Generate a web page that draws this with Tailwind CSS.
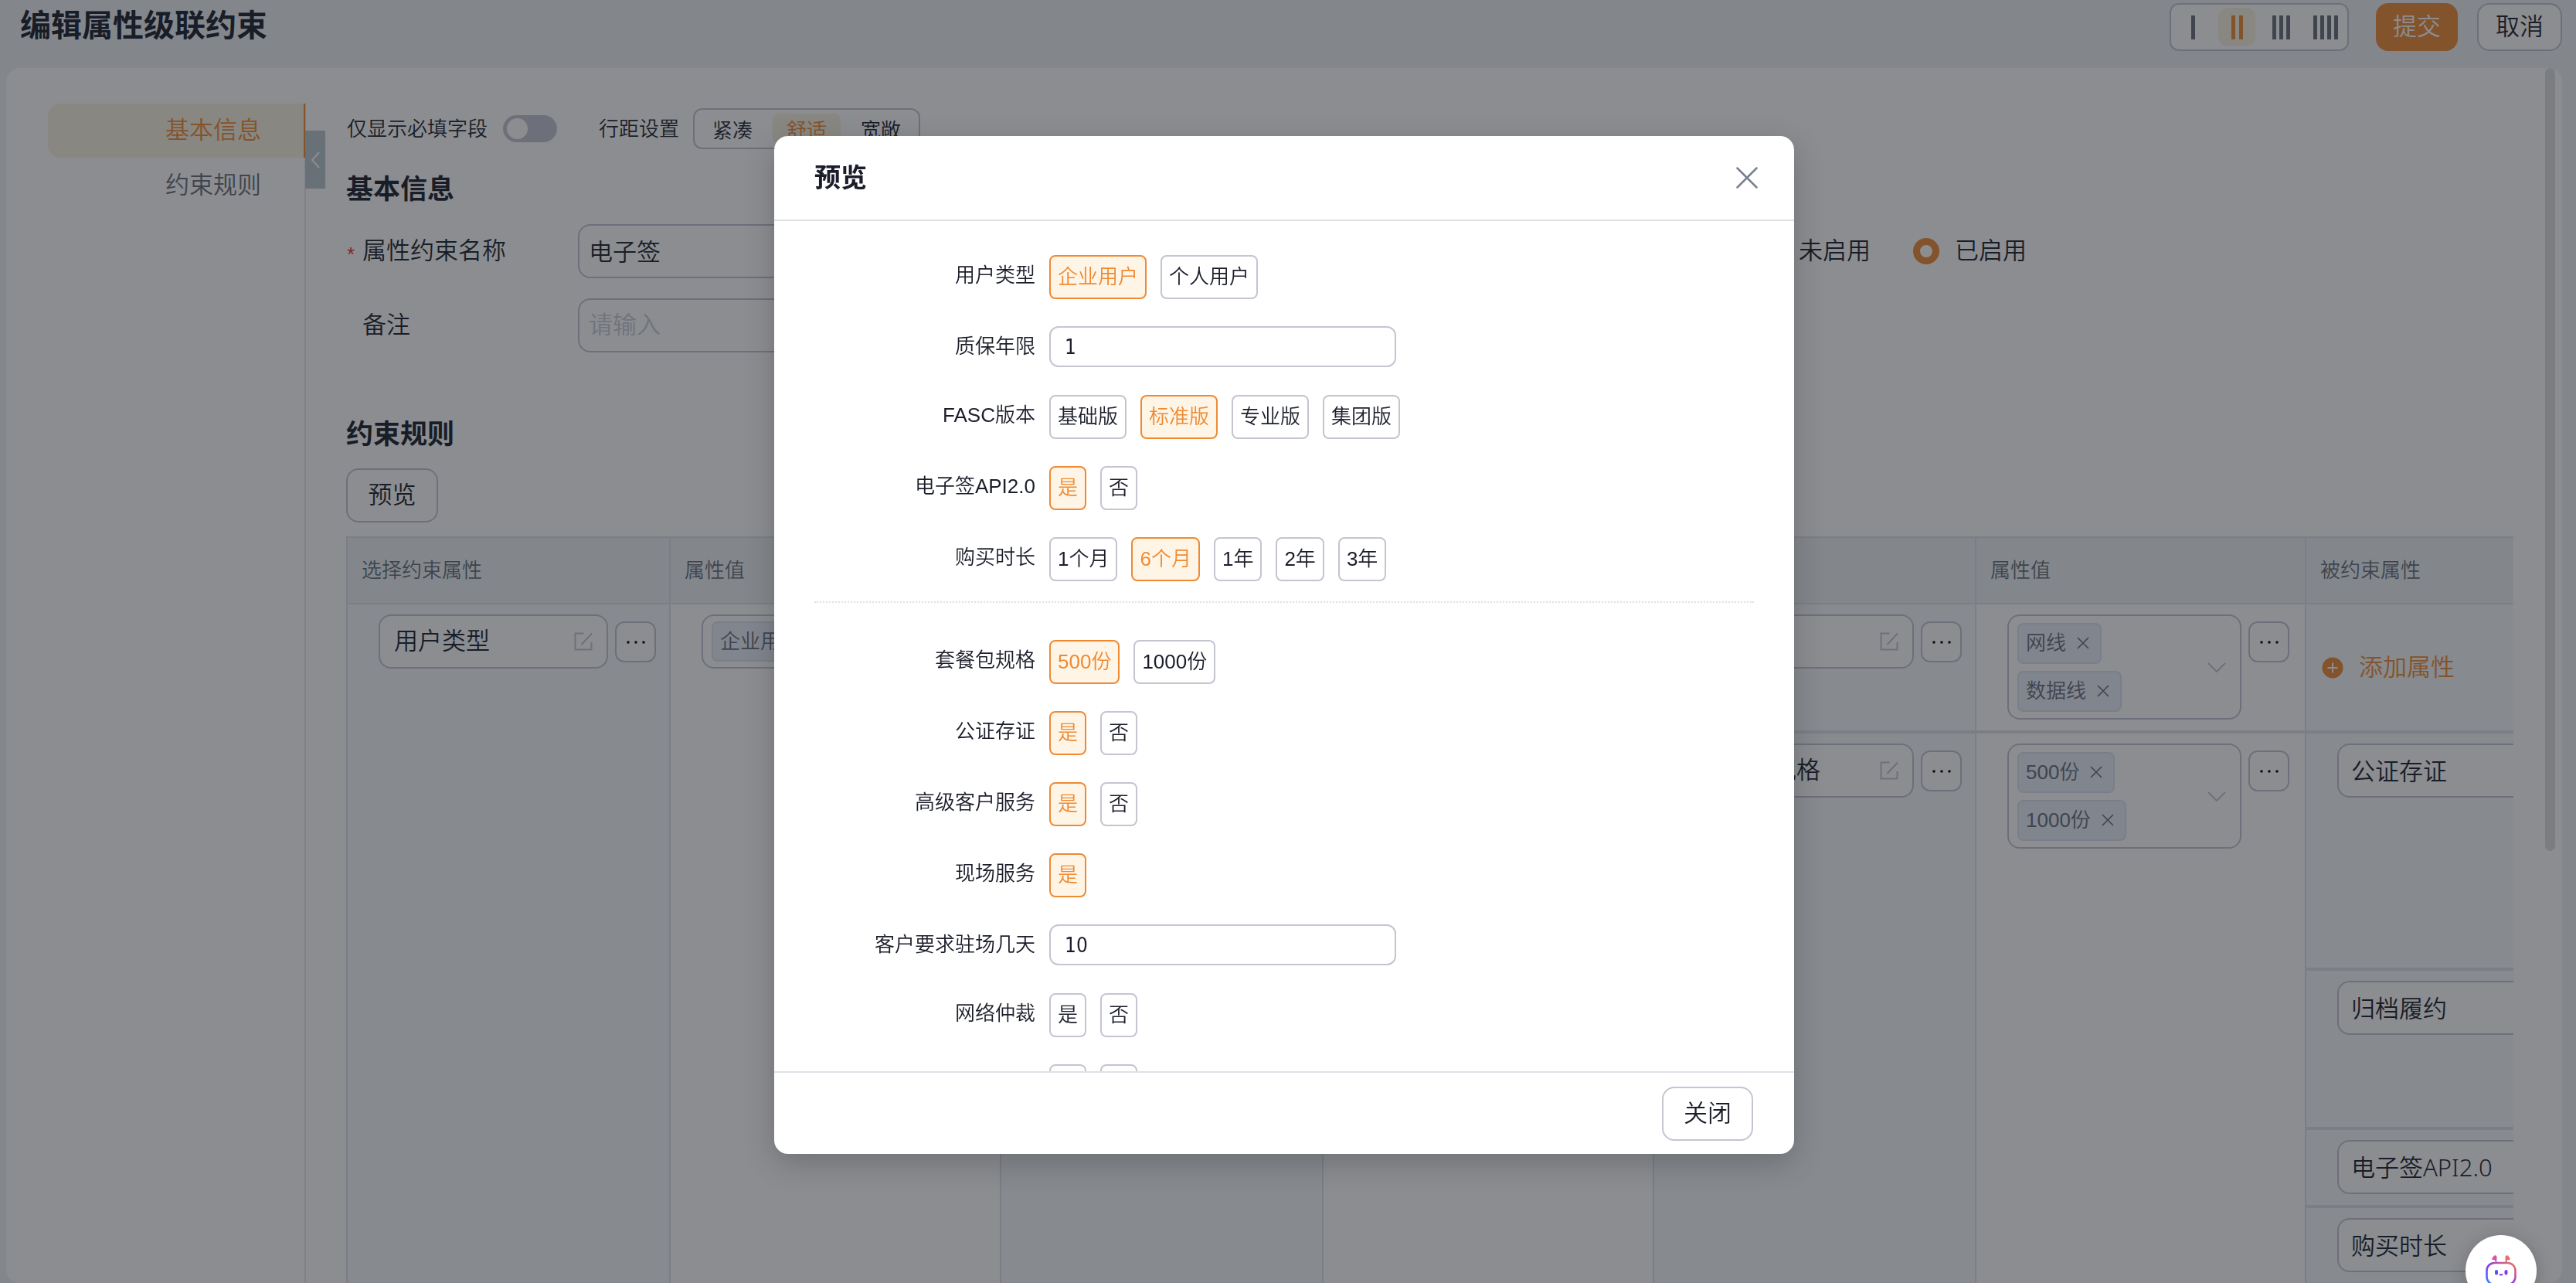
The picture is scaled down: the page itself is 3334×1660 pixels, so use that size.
<!DOCTYPE html>
<html lang="zh-CN">
<head>
  <meta charset="UTF-8" />
  <title>编辑属性级联约束</title>
  <script src="https://cdn.jsdelivr.net/npm/@tailwindcss/browser@4"></script>
</head>
<body class="h-screen overflow-hidden flex flex-col bg-[#eef3f5] text-[#1b1e2a] text-[31px] leading-[44px] font-[350] font-['Liberation_Sans','Noto_Sans_CJK_SC',sans-serif]">

  <svg class="hidden">
    <symbol id="edit" viewBox="0 0 24 24"><path d="M12.500 1.500H1.500v21h21V13M9.500 16 23 1.500" fill="none" stroke="currentColor" stroke-width="2" /></symbol>
    <symbol id="dots" viewBox="0 0 24 6"><circle cx="2" cy="3" r="1.800" /><circle cx="12" cy="3" r="1.800" /><circle cx="22" cy="3" r="1.800" /></symbol>
    <symbol id="cross" viewBox="0 0 16 16"><path d="m1 1 14 14M15 1 1 15" fill="none" stroke="currentColor" stroke-width="1.600" /></symbol>
    <symbol id="down" viewBox="0 0 24 13"><path d="m1 1 11 11L23 1" fill="none" stroke="currentColor" stroke-width="2" /></symbol>
  </svg>

  <!-- Header -->
  <header class="h-[88px] shrink-0 flex items-start justify-between pt-1 pl-[26px] pr-[18px]">
    <h1 class="text-[40px] leading-[58px] font-bold">编辑属性级联约束</h1>
    <div class="flex">
      <div class="w-[232px] h-[62px] border-2 border-[#c3c5d0] rounded-xl bg-white p-1 flex justify-between text-[#666d78]">
        <button aria-label="一列" class="w-12 flex items-center justify-center gap-1"><i class="w-[5px] h-[31px] bg-current"></i></button>
        <button aria-label="两列" class="w-12 flex items-center justify-center gap-[5px] rounded-xl bg-[#fbf2df] text-[#ef8a32]"><i class="w-[5px] h-[31px] bg-current"></i><i class="w-[5px] h-[31px] bg-current"></i></button>
        <button aria-label="三列" class="w-12 flex items-center justify-center gap-1"><i class="w-[5px] h-[31px] bg-current"></i><i class="w-[5px] h-[31px] bg-current"></i><i class="w-[5px] h-[31px] bg-current"></i></button>
        <button aria-label="四列" class="w-12 flex items-center justify-center gap-1"><i class="w-[5px] h-[31px] bg-current"></i><i class="w-[5px] h-[31px] bg-current"></i><i class="w-[5px] h-[31px] bg-current"></i><i class="w-[5px] h-[31px] bg-current"></i></button>
      </div>
      <button class="ml-[35px] w-[106px] h-[62px] rounded-2xl bg-[#ef8a32] text-white">提交</button>
      <button class="ml-[25px] w-[110px] h-[62px] rounded-2xl border-2 border-[#c3c5d0] bg-white">取消</button>
    </div>
  </header>

  <div class="relative flex-1 min-h-0 ml-2 mr-[18px] bg-white rounded-[18px] flex overflow-hidden">
    <!-- Sidebar -->
    <aside class="relative w-[388px] shrink-0 pt-[46px]">
      <div class="absolute right-0 inset-y-0 mt-[46px] w-0.5 bg-[#e6e8ec]"></div>
      <nav class="relative pl-[54px] flex flex-col gap-px">
        <a href="#base" class="h-[70px] mr-px pr-[55px] flex items-center justify-end rounded-l-2xl border-r-2 border-[#ef8a32] bg-[#fbf2df] text-[#ef8a32]">基本信息</a>
        <a href="#rules" class="h-[70px] pr-[58px] flex items-center justify-end text-[#666d78]">约束规则</a>
      </nav>
      <button aria-label="收起" class="absolute left-[387px] top-[81px] z-10 w-[26px] h-[75px] bg-[#b9c4cd] flex items-center justify-center text-white">
        <svg class="w-3 h-[22px]" viewBox="0 0 12 22"><path d="M11 1 2 11l9 10" fill="none" stroke="currentColor" stroke-width="2" /></svg>
      </button>
    </aside>

    <main class="flex-1 min-w-0 pl-[52px] pt-[52px] pr-[63px]">
      <div class="h-[53px] flex items-center text-[26px]">
        <label for="required-only" class="pl-px">仅显示必填字段</label>
        <span class="relative ml-5 w-[70px] h-[35px] flex">
          <input id="required-only" type="checkbox" class="appearance-none w-full h-full rounded-full bg-[#c3c5d0]" />
          <i class="absolute left-[5px] top-1 size-[27px] rounded-full bg-white"></i>
        </span>
        <span class="ml-[54px]">行距设置</span>
        <div class="ml-[18px] h-[53px] p-[5px] border-2 border-[#c3c5d0] rounded-xl flex gap-2">
          <button class="w-[88px] rounded-lg">紧凑</button>
          <button class="w-[88px] rounded-lg bg-[#fbf2df] text-[#ef8a32]">舒适</button>
          <button class="w-[88px] rounded-lg">宽敞</button>
        </div>
      </div>

      <h2 id="base" class="mt-[30px] text-[35px] font-bold">基本信息</h2>
      <div class="mt-[23px] flex items-center">
        <label for="name" class="w-[300px] shrink-0 flex items-center"><b class="w-[21px] pl-px pt-2 text-[26px] font-normal text-[#e5322d]">*</b>属性约束名称</label>
        <input id="name" value="电子签" class="w-[1040px] shrink-0 h-[70px] px-3 pb-1 rounded-2xl border-2 border-[#c3c5d0]" />
        <span class="ml-[60px] w-[426px] shrink-0">状态</span>
        <label class="w-[202px] shrink-0 flex items-center gap-5"><input type="radio" name="state" class="appearance-none size-[34px] rounded-full border-2 border-[#c3c5d0]" />未启用</label>
        <label class="flex items-center gap-5"><input type="radio" name="state" checked class="appearance-none size-[34px] rounded-full border-[#ef8a32] border-[9px]" />已启用</label>
      </div>
      <div class="mt-[26px] flex items-center">
        <label for="remark" class="w-[300px] shrink-0 pl-[21px]">备注</label>
        <input id="remark" placeholder="请输入" class="w-[1040px] h-[70px] px-3 rounded-2xl border-2 border-[#c3c5d0] placeholder:text-[#c9ccd2]" />
      </div>

      <h2 id="rules" class="mt-[84px] text-[35px] font-bold">约束规则</h2>
      <button class="mt-[22px] w-[119px] h-[70px] rounded-2xl border-2 border-[#c3c5d0] block">预览</button>

      <div class="mt-[18px] overflow-hidden">
        <table class="table-fixed border-separate border-spacing-0 w-[2963px] border-t-2 border-[#dfe1e6]">
          <colgroup>
            <col class="w-[418px]" /><col class="w-[428px]" /><col class="w-[417px]" /><col class="w-[428px]" /><col class="w-[417px]" /><col class="w-[427px]" /><col class="w-[428px]" />
          </colgroup>
          <thead>
            <tr class="h-[86px] bg-[#eff3f5] text-[26px] text-left text-[#666d78]">
              <th class="font-[350] px-[18px] border-l-2 border-b-2 border-[#dfe1e6]">选择约束属性</th>
              <th class="font-[350] px-[18px] border-l-2 border-b-2 border-[#dfe1e6]">属性值</th>
              <th class="font-[350] px-[18px] border-l-2 border-b-2 border-[#dfe1e6]">选择约束属性</th>
              <th class="font-[350] px-[18px] border-l-2 border-b-2 border-[#dfe1e6]">属性值</th>
              <th class="font-[350] px-[18px] border-l-2 border-b-2 border-[#dfe1e6]">选择约束属性</th>
              <th class="font-[350] px-[18px] border-l-2 border-b-2 border-[#dfe1e6]">属性值</th>
              <th class="font-[350] px-[18px] border-l-2 border-b-2 border-[#dfe1e6]">被约束属性</th>
            </tr>
          </thead>
          <tbody class="align-top">
            <tr class="h-[167px]">
              <td rowspan="5" class="pl-10 pt-[13px] border-l-2 border-[#dfe1e6] bg-[#f6f9fb]">
                <div class="flex gap-[9px]">
                  <div class="w-[297px] h-[70px] px-[18px] rounded-2xl border-2 border-[#c3c5d0] bg-white flex items-center text-[#c3c5d0]">
                    <input aria-label="约束属性" value="用户类型" class="flex-1 min-w-0 text-[#1b1e2a]" /><svg class="size-6"><use href="#edit" /></svg>
                  </div>
                  <button aria-label="更多" class="mt-[9px] size-[53px] rounded-xl border-2 border-[#c3c5d0] bg-white flex items-center justify-center"><svg class="w-6 h-1.5"><use href="#dots" /></svg></button>
                </div>
              </td>
              <td rowspan="5" class="pl-10 pt-[13px] border-l-2 border-[#dfe1e6]">
                <div class="w-[302px] h-[70px] p-[7px] pl-[11px] rounded-2xl border-2 border-[#c3c5d0] flex text-[26px] text-[#666d78]">
                  <span class="flex items-center h-[52px] px-[9px] rounded-lg border-2 border-[#dde0ec] bg-[#ebeef9]">企业用户</span>
                </div>
              </td>
              <td rowspan="5" class="border-l-2 border-[#dfe1e6] bg-[#f6f9fb]"></td>
              <td rowspan="5" class="border-l-2 border-[#dfe1e6]"></td>
              <td class="pl-10 pt-[13px] border-l-2 border-b-4 border-[#dfe1e6] bg-[#f6f9fb]">
                <div class="flex gap-[9px]">
                  <div class="w-[296px] h-[70px] px-[18px] rounded-2xl border-2 border-[#c3c5d0] bg-white flex items-center text-[#c3c5d0]">
                    <input aria-label="约束属性" value="" class="flex-1 min-w-0 text-[#1b1e2a]" /><svg class="size-6"><use href="#edit" /></svg>
                  </div>
                  <button aria-label="更多" class="mt-[9px] size-[53px] rounded-xl border-2 border-[#c3c5d0] bg-white flex items-center justify-center"><svg class="w-6 h-1.5"><use href="#dots" /></svg></button>
                </div>
              </td>
              <td class="pl-10 pt-[13px] border-l-2 border-b-4 border-[#dfe1e6]">
                <div class="flex gap-[9px]">
                  <div class="w-[303px] h-[136px] pl-[11px] pr-[18px] rounded-2xl border-2 border-[#c3c5d0] flex items-center justify-between text-[26px] text-[#666d78]">
                    <div class="flex flex-col items-start gap-[9px]">
                      <span class="flex items-center gap-3.5 h-[53px] pl-[9px] pr-3.5 rounded-lg border-2 border-[#dde0ec] bg-[#ebeef9]">网线<svg class="size-4"><use href="#cross" /></svg></span>
                      <span class="flex items-center gap-3.5 h-[53px] pl-[9px] pr-3.5 rounded-lg border-2 border-[#dde0ec] bg-[#ebeef9]">数据线<svg class="size-4"><use href="#cross" /></svg></span>
                    </div>
                    <svg class="w-6 h-[13px] text-[#c3c5d0]"><use href="#down" /></svg>
                  </div>
                  <button aria-label="更多" class="mt-[9px] size-[53px] rounded-xl border-2 border-[#c3c5d0] bg-white flex items-center justify-center"><svg class="w-6 h-1.5"><use href="#dots" /></svg></button>
                </div>
              </td>
              <td class="pl-5 align-middle border-l-2 border-b-4 border-[#dfe1e6] bg-[#f6f9fb]">
                <button class="flex items-center gap-5 text-[#ef8a32]">
                  <svg class="size-7" viewBox="0 0 28 28"><circle cx="14" cy="14" r="13.500" fill="currentColor" /><path d="M14 7.500v13M7.500 14h13" stroke="#fff" stroke-width="2" /></svg>添加属性
                </button>
              </td>
            </tr>
            <tr class="h-[307px]">
              <td rowspan="4" class="pl-10 pt-[13px] border-l-2 border-[#dfe1e6] bg-[#f6f9fb]">
                <div class="flex gap-[9px]">
                  <div class="w-[296px] h-[70px] px-[18px] rounded-2xl border-2 border-[#c3c5d0] bg-white flex items-center text-[#c3c5d0]">
                    <input aria-label="约束属性" value="套餐包规格" class="flex-1 min-w-0 text-[#1b1e2a]" /><svg class="size-6"><use href="#edit" /></svg>
                  </div>
                  <button aria-label="更多" class="mt-[9px] size-[53px] rounded-xl border-2 border-[#c3c5d0] bg-white flex items-center justify-center"><svg class="w-6 h-1.5"><use href="#dots" /></svg></button>
                </div>
              </td>
              <td rowspan="4" class="pl-10 pt-[13px] border-l-2 border-[#dfe1e6]">
                <div class="flex gap-[9px]">
                  <div class="w-[303px] h-[136px] pl-[11px] pr-[18px] rounded-2xl border-2 border-[#c3c5d0] flex items-center justify-between text-[26px] text-[#666d78]">
                    <div class="flex flex-col items-start gap-[9px]">
                      <span class="flex items-center gap-3.5 h-[53px] pl-[9px] pr-3.5 rounded-lg border-2 border-[#dde0ec] bg-[#ebeef9]">500份<svg class="size-4"><use href="#cross" /></svg></span>
                      <span class="flex items-center gap-3.5 h-[53px] pl-[9px] pr-3.5 rounded-lg border-2 border-[#dde0ec] bg-[#ebeef9]">1000份<svg class="size-4"><use href="#cross" /></svg></span>
                    </div>
                    <svg class="w-6 h-[13px] text-[#c3c5d0]"><use href="#down" /></svg>
                  </div>
                  <button aria-label="更多" class="mt-[9px] size-[53px] rounded-xl border-2 border-[#c3c5d0] bg-white flex items-center justify-center"><svg class="w-6 h-1.5"><use href="#dots" /></svg></button>
                </div>
              </td>
              <td class="pl-10 pt-[13px] border-l-2 border-b-4 border-[#dfe1e6] bg-[#f6f9fb]"><input aria-label="被约束属性" value="公证存证" class="block w-[297px] h-[70px] px-4 pb-1 rounded-2xl border-2 border-[#c3c5d0] bg-white" /></td>
            </tr>
            <tr class="h-[206px]">
              <td class="pl-10 pt-[13px] border-l-2 border-b-4 border-[#dfe1e6] bg-[#f6f9fb]"><input aria-label="被约束属性" value="归档履约" class="block w-[297px] h-[70px] px-4 pb-1 rounded-2xl border-2 border-[#c3c5d0] bg-white" /></td>
            </tr>
            <tr class="h-[101px]">
              <td class="pl-10 pt-[13px] border-l-2 border-b-4 border-[#dfe1e6] bg-[#f6f9fb]"><input aria-label="被约束属性" value="电子签API2.0" class="block w-[297px] h-[70px] px-4 pb-1 rounded-2xl border-2 border-[#c3c5d0] bg-white font-['Noto_Sans','Noto_Sans_CJK_SC',sans-serif]" /></td>
            </tr>
            <tr class="h-[101px]">
              <td class="pl-10 pt-[13px] border-l-2 border-b-4 border-[#dfe1e6] bg-[#f6f9fb]"><input aria-label="被约束属性" value="购买时长" class="block w-[297px] h-[70px] px-4 pb-1 rounded-2xl border-2 border-[#c3c5d0] bg-white" /></td>
            </tr>
          </tbody>
        </table>
      </div>
    </main>
    <div class="absolute right-[9px] top-0 w-[13px] h-[1013px] rounded-full bg-[#dfdfdf]"></div>
  </div>

  <!-- Preview dialog -->
  <div class="fixed inset-0 z-20 bg-[#181b23]/50 flex justify-center pt-44 pb-[167px] pr-2.5">
    <section role="dialog" aria-labelledby="preview-title" class="w-[1320px] bg-white rounded-[18px] shadow-[0_12px_40px_rgba(0,0,0,0.2)] flex flex-col overflow-hidden">
      <div class="h-[110px] shrink-0 pl-[52px] pr-[47px] border-b-2 border-[#dfe0e6] flex items-center justify-between">
        <h2 id="preview-title" class="text-[34px] font-bold">预览</h2>
        <button aria-label="关闭窗口" class="text-[#79808f]"><svg class="size-7" viewBox="0 0 28 28"><path d="m1.500 1.500 25 25M26.500 1.500l-25 25" fill="none" stroke="currentColor" stroke-width="2.500" stroke-linecap="round" /></svg></button>
      </div>
      <div class="flex-1 min-h-0 overflow-hidden px-[52px] pt-11 text-[26px]">
        <div class="h-[92px] flex gap-[18px]">
          <span class="w-[286px] text-right leading-[52px]">用户类型</span>
          <button class="h-[57px] px-[9px] pb-0.5 rounded-lg border-2 border-[#ef8a32] bg-[#fff5e6] text-[#ef8a32]">企业用户</button>
          <button class="h-[57px] px-[9px] pb-0.5 rounded-lg border-2 border-[#c3c5d0]">个人用户</button>
        </div>
        <div class="h-[89px] flex gap-[18px]">
          <label for="warranty" class="w-[286px] text-right leading-[52px]">质保年限</label>
          <input id="warranty" value="1" class="w-[449px] h-[53px] px-[18px] rounded-xl border-2 border-[#c3c5d0] font-['DejaVu_Sans_Condensed','DejaVu_Sans',sans-serif]" />
        </div>
        <div class="h-[92px] flex gap-[18px]">
          <span class="w-[286px] text-right leading-[52px]">FASC版本</span>
          <button class="h-[57px] px-[9px] pb-0.5 rounded-lg border-2 border-[#c3c5d0]">基础版</button>
          <button class="h-[57px] px-[9px] pb-0.5 rounded-lg border-2 border-[#ef8a32] bg-[#fff5e6] text-[#ef8a32]">标准版</button>
          <button class="h-[57px] px-[9px] pb-0.5 rounded-lg border-2 border-[#c3c5d0]">专业版</button>
          <button class="h-[57px] px-[9px] pb-0.5 rounded-lg border-2 border-[#c3c5d0]">集团版</button>
        </div>
        <div class="h-[92px] flex gap-[18px]">
          <span class="w-[286px] text-right leading-[52px]">电子签API2.0</span>
          <button class="h-[57px] px-[9px] pb-0.5 rounded-lg border-2 border-[#ef8a32] bg-[#fff5e6] text-[#ef8a32]">是</button>
          <button class="h-[57px] px-[9px] pb-0.5 rounded-lg border-2 border-[#c3c5d0]">否</button>
        </div>
        <div class="h-[83px] flex gap-[18px]">
          <span class="w-[286px] text-right leading-[52px]">购买时长</span>
          <button class="h-[57px] px-[9px] pb-0.5 rounded-lg border-2 border-[#c3c5d0]">1个月</button>
          <button class="h-[57px] px-[9px] pb-0.5 rounded-lg border-2 border-[#ef8a32] bg-[#fff5e6] text-[#ef8a32]">6个月</button>
          <button class="h-[57px] px-[9px] pb-0.5 rounded-lg border-2 border-[#c3c5d0]">1年</button>
          <button class="h-[57px] px-[9px] pb-0.5 rounded-lg border-2 border-[#c3c5d0]">2年</button>
          <button class="h-[57px] px-[9px] pb-0.5 rounded-lg border-2 border-[#c3c5d0]">3年</button>
        </div>
        <hr class="border-0 border-t-2 border-dotted border-[#dfe0e6] mb-12" />
        <div class="h-[92px] flex gap-[18px]">
          <span class="w-[286px] text-right leading-[52px]">套餐包规格</span>
          <button class="h-[57px] px-[9px] pb-0.5 rounded-lg border-2 border-[#ef8a32] bg-[#fff5e6] text-[#ef8a32]">500份</button>
          <button class="h-[57px] px-[9px] pb-0.5 rounded-lg border-2 border-[#c3c5d0]">1000份</button>
        </div>
        <div class="h-[92px] flex gap-[18px]">
          <span class="w-[286px] text-right leading-[52px]">公证存证</span>
          <button class="h-[57px] px-[9px] pb-0.5 rounded-lg border-2 border-[#ef8a32] bg-[#fff5e6] text-[#ef8a32]">是</button>
          <button class="h-[57px] px-[9px] pb-0.5 rounded-lg border-2 border-[#c3c5d0]">否</button>
        </div>
        <div class="h-[92px] flex gap-[18px]">
          <span class="w-[286px] text-right leading-[52px]">高级客户服务</span>
          <button class="h-[57px] px-[9px] pb-0.5 rounded-lg border-2 border-[#ef8a32] bg-[#fff5e6] text-[#ef8a32]">是</button>
          <button class="h-[57px] px-[9px] pb-0.5 rounded-lg border-2 border-[#c3c5d0]">否</button>
        </div>
        <div class="h-[92px] flex gap-[18px]">
          <span class="w-[286px] text-right leading-[52px]">现场服务</span>
          <button class="h-[57px] px-[9px] pb-0.5 rounded-lg border-2 border-[#ef8a32] bg-[#fff5e6] text-[#ef8a32]">是</button>
        </div>
        <div class="h-[89px] flex gap-[18px]">
          <label for="days" class="w-[286px] text-right leading-[52px]">客户要求驻场几天</label>
          <input id="days" value="10" class="w-[449px] h-[53px] px-[18px] rounded-xl border-2 border-[#c3c5d0] font-['DejaVu_Sans_Condensed','DejaVu_Sans',sans-serif]" />
        </div>
        <div class="h-[92px] flex gap-[18px]">
          <span class="w-[286px] text-right leading-[52px]">网络仲裁</span>
          <button class="h-[57px] px-[9px] pb-0.5 rounded-lg border-2 border-[#c3c5d0]">是</button>
          <button class="h-[57px] px-[9px] pb-0.5 rounded-lg border-2 border-[#c3c5d0]">否</button>
        </div>
        <div class="h-[92px] flex gap-[18px]">
          <span class="w-[286px]"></span>
          <button aria-label="是" class="h-[57px] w-12 rounded-lg border-2 border-[#c3c5d0]"></button>
          <button aria-label="否" class="h-[57px] w-12 rounded-lg border-2 border-[#c3c5d0]"></button>
        </div>
      </div>
      <div class="h-[107px] shrink-0 pr-[53px] border-t-2 border-[#dfe0e6] flex items-center justify-end">
        <button class="w-[118px] h-[70px] rounded-2xl border-2 border-[#c3c5d0]">关闭</button>
      </div>
    </section>
  </div>

  <!-- Assistant -->
  <button aria-label="助手" class="fixed z-30 right-[51px] -bottom-[30px] size-[92px] rounded-full bg-white shadow-[0_4px_24px_rgba(0,0,0,0.2)] flex items-center justify-center">
    <svg class="w-10 h-[42px]" viewBox="0 0 40 42" fill="none" stroke-width="2.600">
      <defs><linearGradient id="bot" x1="0" y1="1" x2="1" y2="0"><stop offset="0" stop-color="#2f8bff" /><stop offset=".45" stop-color="#8a35f0" /><stop offset="1" stop-color="#f4775a" /></linearGradient></defs>
      <g stroke="url(#bot)">
        <rect x="1.500" y="11" width="37" height="28" rx="10" />
        <path d="m14 10-2-4M26 10l2-4" stroke-width="1.600" />
      </g>
      <path d="M14.500 7.500 9 7a2 2 0 0 1 1-3.500 2.200 2.200 0 0 1 4.500 0Z" fill="#d6559b" /><path d="m25.500 7.500 5.500-.5a2 2 0 0 0-1-3.500 2.200 2.200 0 0 0-4.500 0Z" fill="#ec6c6c" />
      <rect x="12" y="20" width="4" height="6.500" rx="2" fill="#5b4bf5" /><rect x="24.500" y="20" width="4" height="6.500" rx="2" fill="#8a35f0" />
      <path d="M18 25.500q2 2 4 0" stroke="#8a35f0" stroke-width="1.800" />
    </svg>
  </button>
</body>
</html>
